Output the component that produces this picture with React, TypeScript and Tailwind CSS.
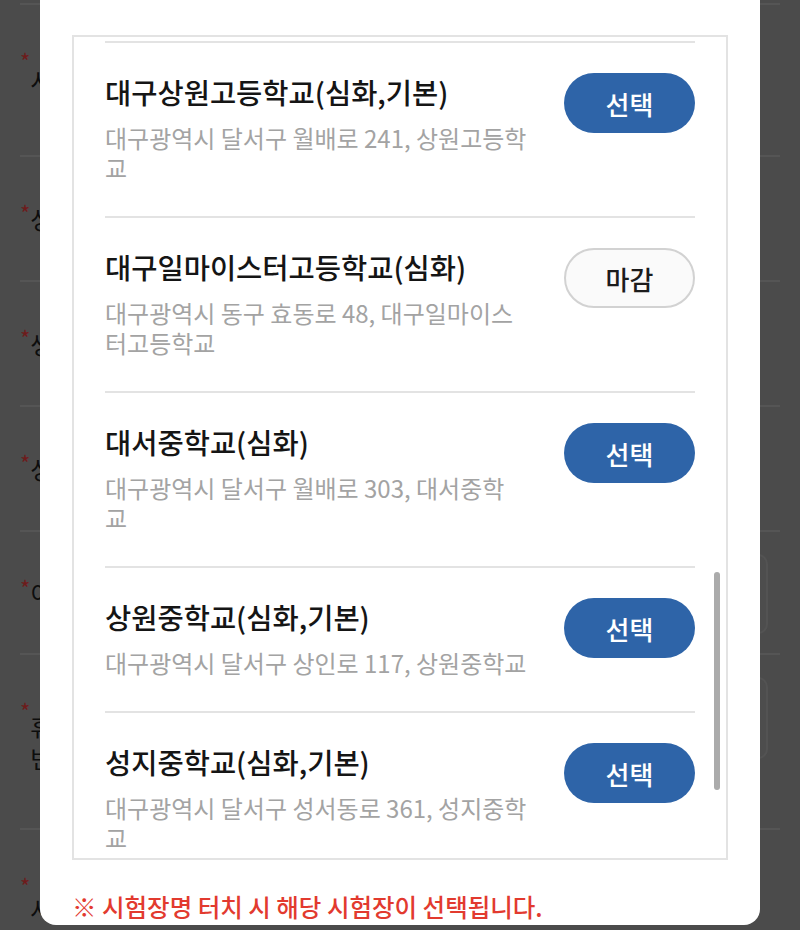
import React from 'react';

type Site = {
  name: string;
  address: string;
  closed?: boolean;
};

// addresses keep the line breaks the list shows
const SITES: Site[] = [
  { name: '대구상원고등학교(심화,기본)', address: '대구광역시 달서구 월배로 241, 상원고등학\n교' },
  { name: '대구일마이스터고등학교(심화)', address: '대구광역시 동구 효동로 48, 대구일마이스\n터고등학교', closed: true },
  { name: '대서중학교(심화)', address: '대구광역시 달서구 월배로 303, 대서중학\n교' },
  { name: '상원중학교(심화,기본)', address: '대구광역시 달서구 상인로 117, 상원중학교' },
  { name: '성지중학교(심화,기본)', address: '대구광역시 달서구 성서동로 361, 성지중학\n교' },
];

// Rows of the form sitting behind the dimmed overlay
const FORM_ROWS = [
  { label: '시험장', h: 'h-[152px]' },
  { label: '성명', h: 'h-[125px]' },
  { label: '생년월일', h: 'h-[125px]' },
  { label: '성별', h: 'h-[125px]' },
  { label: '이메일', h: 'h-[123px]', input: 'mt-[22px] h-[80px]' },
  { label: '휴대폰\n번호', h: 'h-[175px]', input: 'mt-[22px] h-[82px]' },
  { label: '사진', h: 'h-[160px]' },
];

const SiteRow: React.FC<{ site: Site }> = ({ site }) => (
  <div className="mx-[31px] flex gap-[30px] border-t-2 border-[#e3e3e3] pt-[30px] pb-[33px]">
    <div className="min-w-0 flex-1">
      <div className="text-[28.5px] font-medium leading-[38px] text-[#151515]">{site.name}</div>
      <div className="mt-[12px] whitespace-pre-line text-[24px] leading-[30px] text-[#a3a3a3]">{site.address}</div>
    </div>
    {site.closed ? (
      <button className="h-[60px] w-[131px] shrink-0 rounded-full border-2 border-[#d2d2d2] bg-[#fafafa] text-[26px] font-medium text-[#1c1c1c]">
        마감
      </button>
    ) : (
      <button className="h-[60px] w-[131px] shrink-0 rounded-full bg-[#2e64a8] text-[26px] font-medium text-white">
        선택
      </button>
    )}
  </div>
);

export default function App() {
  return (
    <div className="relative h-[930px] w-[800px] overflow-hidden bg-[#4b4b4b] font-['Noto_Sans_CJK_KR','Noto_Sans',sans-serif]">
      {/* background form */}
      <div className="flex flex-col px-[20px] pt-[3px]">
        {FORM_ROWS.map((row, i) => (
          <div key={i} className={`relative flex border-t-2 border-[#555555] ${row.h}`}>
            <div className="flex h-full items-center">
              <span className="mt-[-8px] self-start pt-[52px] text-[22px] leading-none text-[#6e1b1b]">*</span>
              <span className="whitespace-pre-line text-[24px] leading-[32px] text-[#0d0d0d]">{row.label}</span>
            </div>
            {row.input && (
              <div className={`ml-auto mr-[12px] w-[400px] rounded-[10px] border-2 border-[#535353] bg-[#4d4d4d] ${row.input}`} />
            )}
          </div>
        ))}
      </div>

      {/* modal */}
      <div className="absolute left-[40px] top-0 flex h-[925px] w-[720px] flex-col rounded-b-[16px] bg-white px-[32px] pt-[35px]">
        <div className="relative h-[825px] overflow-hidden border-2 border-[#e3e3e3] bg-white">
          <div className="pt-[4px]">
            {SITES.map((s) => (
              <SiteRow key={s.name} site={s} />
            ))}
          </div>
          <div className="absolute left-[640px] top-[535px] h-[218px] w-[6px] rounded-full bg-[#ababab]" />
        </div>
        <p className="mt-[31px] text-[24.5px] font-medium leading-[32px] text-[#e23a2f]">
          ※ 시험장명 터치 시 해당 시험장이 선택됩니다.
        </p>
      </div>
    </div>
  );
}
